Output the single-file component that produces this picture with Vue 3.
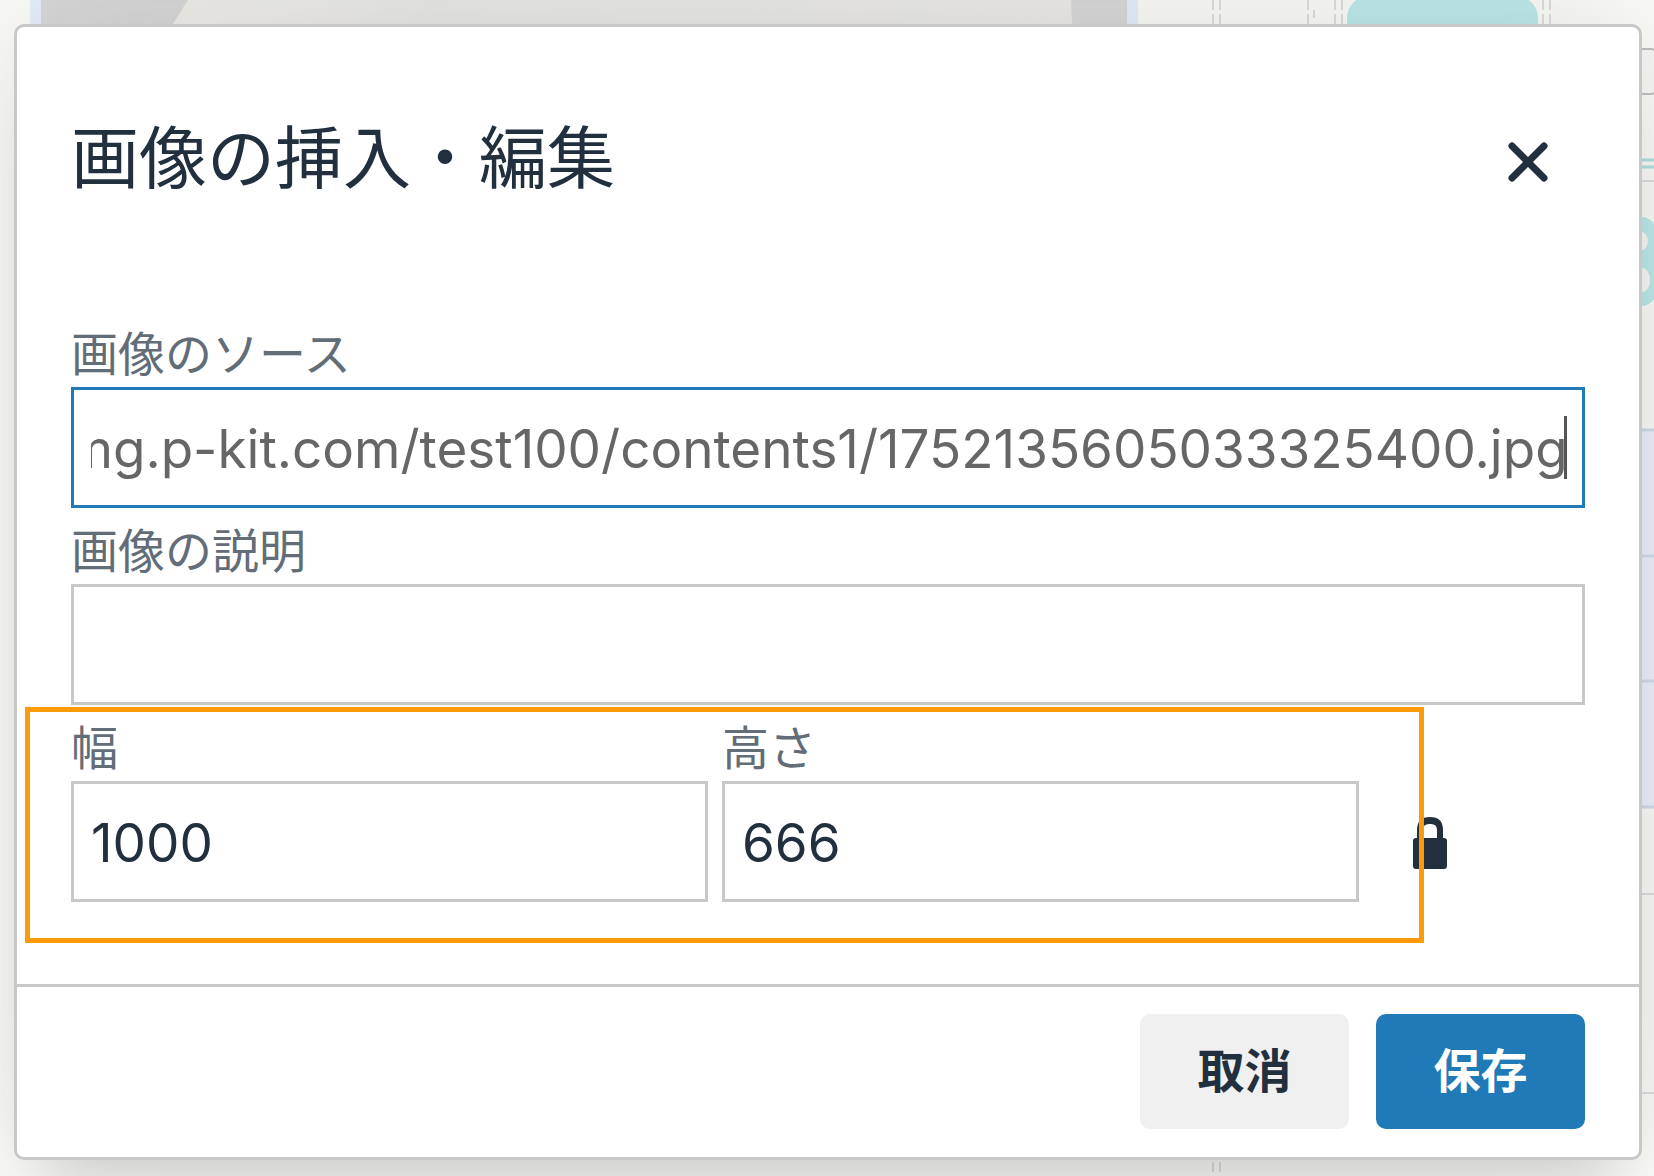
<script setup>
import { ref, onMounted } from 'vue'

const source = ref('https://img.p-kit.com/test100/contents1/1752135605033325400.jpg')
const description = ref('')
const width = ref('1000')
const height = ref('666')
const sourceInput = ref(null)

onMounted(() => {
  const el = sourceInput.value
  el.scrollLeft = el.scrollWidth
})
</script>

<template>
  <div class="page">
    <svg class="backdrop" aria-hidden="true">
      <defs>
        <linearGradient id="photo" x1="0" x2="1" y1="0" y2="0">
          <stop offset="0" stop-color="#f1efe8" />
          <stop offset="0.3" stop-color="#e8e8e6" />
          <stop offset="1" stop-color="#ebeae5" />
        </linearGradient>
      </defs>
      <rect x="30" y="0" width="1108" height="60" fill="#e6eefa" />
      <rect x="41" y="0" width="1086" height="60" fill="#d8d8d8" />
      <path d="M188 0H1071L1074 60H150Z" fill="url(#photo)" />
      <g stroke="#dedede" stroke-width="2" stroke-dasharray="10 4">
        <path d="M1213 0V1176M1220 0V1176M1308 0V30M1314 10V18M1335 0V30M1342 0V30M1543 0V30M1550 0V30" />
      </g>
      <rect x="1347" y="-4" width="191" height="60" rx="22" fill="#bdeae9" />
      <rect x="1600" y="49" width="57" height="45" rx="6" fill="#f8f8f5" stroke="#c0c0c0" stroke-width="2" />
      <path d="M1640 160H1654M1640 167H1654" stroke="#b0e0e0" stroke-width="3" />
      <path d="M1640 181H1654M1640 894H1654M1640 1093H1654" stroke="#dedede" stroke-width="2" />
      <path d="M1630 217H1644Q1651 219 1656 226V297Q1651 304 1644 306H1630Z" fill="#bdeae9" />
      <ellipse cx="1642" cy="241" rx="6" ry="9" fill="#f8f8f5" />
      <ellipse cx="1642" cy="280" rx="8" ry="12" fill="#f8f8f5" />
      <rect x="1630" y="430" width="30" height="377" fill="#eef2fc" />
      <path d="M1640 430H1654M1640 556H1654M1640 681H1654M1640 807H1654" stroke="#d3dceb" stroke-width="3" />
    </svg>

    <form class="dialog" role="dialog" aria-labelledby="dialog-title" @submit.prevent>
      <header class="dialog-header">
        <h1 id="dialog-title">画像の挿入・編集</h1>
        <button type="button" class="close" aria-label="閉じる">
          <svg viewBox="0 0 40 40" width="40" height="40">
            <path d="M4 4L36 36M36 4L4 36" stroke="#222f3e" stroke-width="7" stroke-linecap="round" />
          </svg>
        </button>
      </header>

      <div class="dialog-body">
        <div class="field">
          <label for="source">画像のソース</label>
          <div class="caret-box">
            <input id="source" ref="sourceInput" v-model="source" class="active" type="text" />
            <span class="caret"></span>
          </div>
        </div>
        <div class="field">
          <label for="description">画像の説明</label>
          <input id="description" v-model="description" type="text" />
        </div>
        <div class="size-row">
          <div class="field">
            <label for="width">幅</label>
            <input id="width" v-model="width" type="text" />
          </div>
          <div class="field">
            <label for="height">高さ</label>
            <input id="height" v-model="height" type="text" />
          </div>
          <button type="button" class="lock" aria-label="縦横比を固定">
            <svg viewBox="0 0 34 52" width="34" height="52">
              <path
                fill="#222f3e"
                fill-rule="evenodd"
                d="M4 21V13Q4 0 17 0Q30 0 30 13V21H31Q34 21 34 24V49Q34 52 31 52H3Q0 52 0 49V24Q0 21 3 21ZM10 21H24V13Q24 7 18 7H16Q10 7 10 13Z"
              />
            </svg>
          </button>
          <div class="highlight"></div>
        </div>
      </div>

      <footer class="dialog-footer">
        <button type="button" class="btn">取消</button>
        <button type="submit" class="btn primary">保存</button>
      </footer>
    </form>
  </div>
</template>

<style>
body {
  margin: 0;
  background: #fbfbf7;
}
</style>

<style scoped>
* {
  box-sizing: border-box;
}

.page {
  position: relative;
  min-height: 100vh;
  padding: 24px 12px 16px 14px;
  overflow: hidden;
  color: #222f3e;
  font-family: Inter, "Noto Sans CJK JP", sans-serif;
}

.backdrop {
  position: absolute;
  inset: 0;
  width: 100%;
  height: 100%;
}

.dialog {
  position: relative;
  background: #fff;
  border: 3px solid #c8c8c8;
  border-radius: 10px;
  box-shadow:
    0 53px 53px -33px rgba(40, 42, 46, 0.15),
    0 0 132px 3px rgba(40, 42, 46, 0.13);
}

.dialog-header {
  display: flex;
  align-items: center;
  justify-content: space-between;
  padding: 83px 91px 0 54px;
}

h1 {
  margin: 0;
  padding-bottom: 8px;
  font-size: 68px;
  font-weight: 400;
  line-height: 96px;
}

button {
  border: 0;
  padding: 0;
  background: none;
  color: inherit;
  font-family: inherit;
}

.close {
  height: 40px;
}

svg {
  display: block;
}

.dialog-body {
  padding: 97px 54px 82px;
}

.field {
  display: flex;
  flex-direction: column;
  flex: 1;
  min-width: 0;
  padding-top: 10px;
}

label {
  color: #636d78;
  font-size: 47px;
  line-height: 66px;
}

input {
  width: 100%;
  height: 121px;
  padding: 3px 14px 0 17px;
  border: 3px solid #c8c8c8;
  border-radius: 0;
  outline: 0;
  background: #fff;
  color: #222f3e;
  font-family: inherit;
  font-size: 53px;
}

input.active {
  border-color: #207ab7;
  color: #666;
}

.caret-box {
  position: relative;
}

.caret {
  position: absolute;
  top: 29px;
  right: 18px;
  width: 3px;
  height: 63px;
  background: #555;
}

.size-row {
  position: relative;
  display: flex;
  align-items: flex-end;
  gap: 14px;
}

.lock {
  width: 34px;
  height: 52px;
  margin: 0 138px 33px 40px;
}

.highlight {
  position: absolute;
  top: 2px;
  right: 161px;
  bottom: -41px;
  left: -46px;
  border: 5px solid #fb9b0c;
  pointer-events: none;
}

.dialog-footer {
  display: flex;
  justify-content: flex-end;
  gap: 27px;
  padding: 27px 54px 28px;
  border-top: 3px solid #c8c8c8;
}

.btn {
  width: 209px;
  height: 115px;
  padding-bottom: 8px;
  border-radius: 10px;
  background: #f0f0f0;
  font-size: 47px;
  font-weight: 700;
}

.primary {
  background: #207ab7;
  color: #fff;
}
</style>
